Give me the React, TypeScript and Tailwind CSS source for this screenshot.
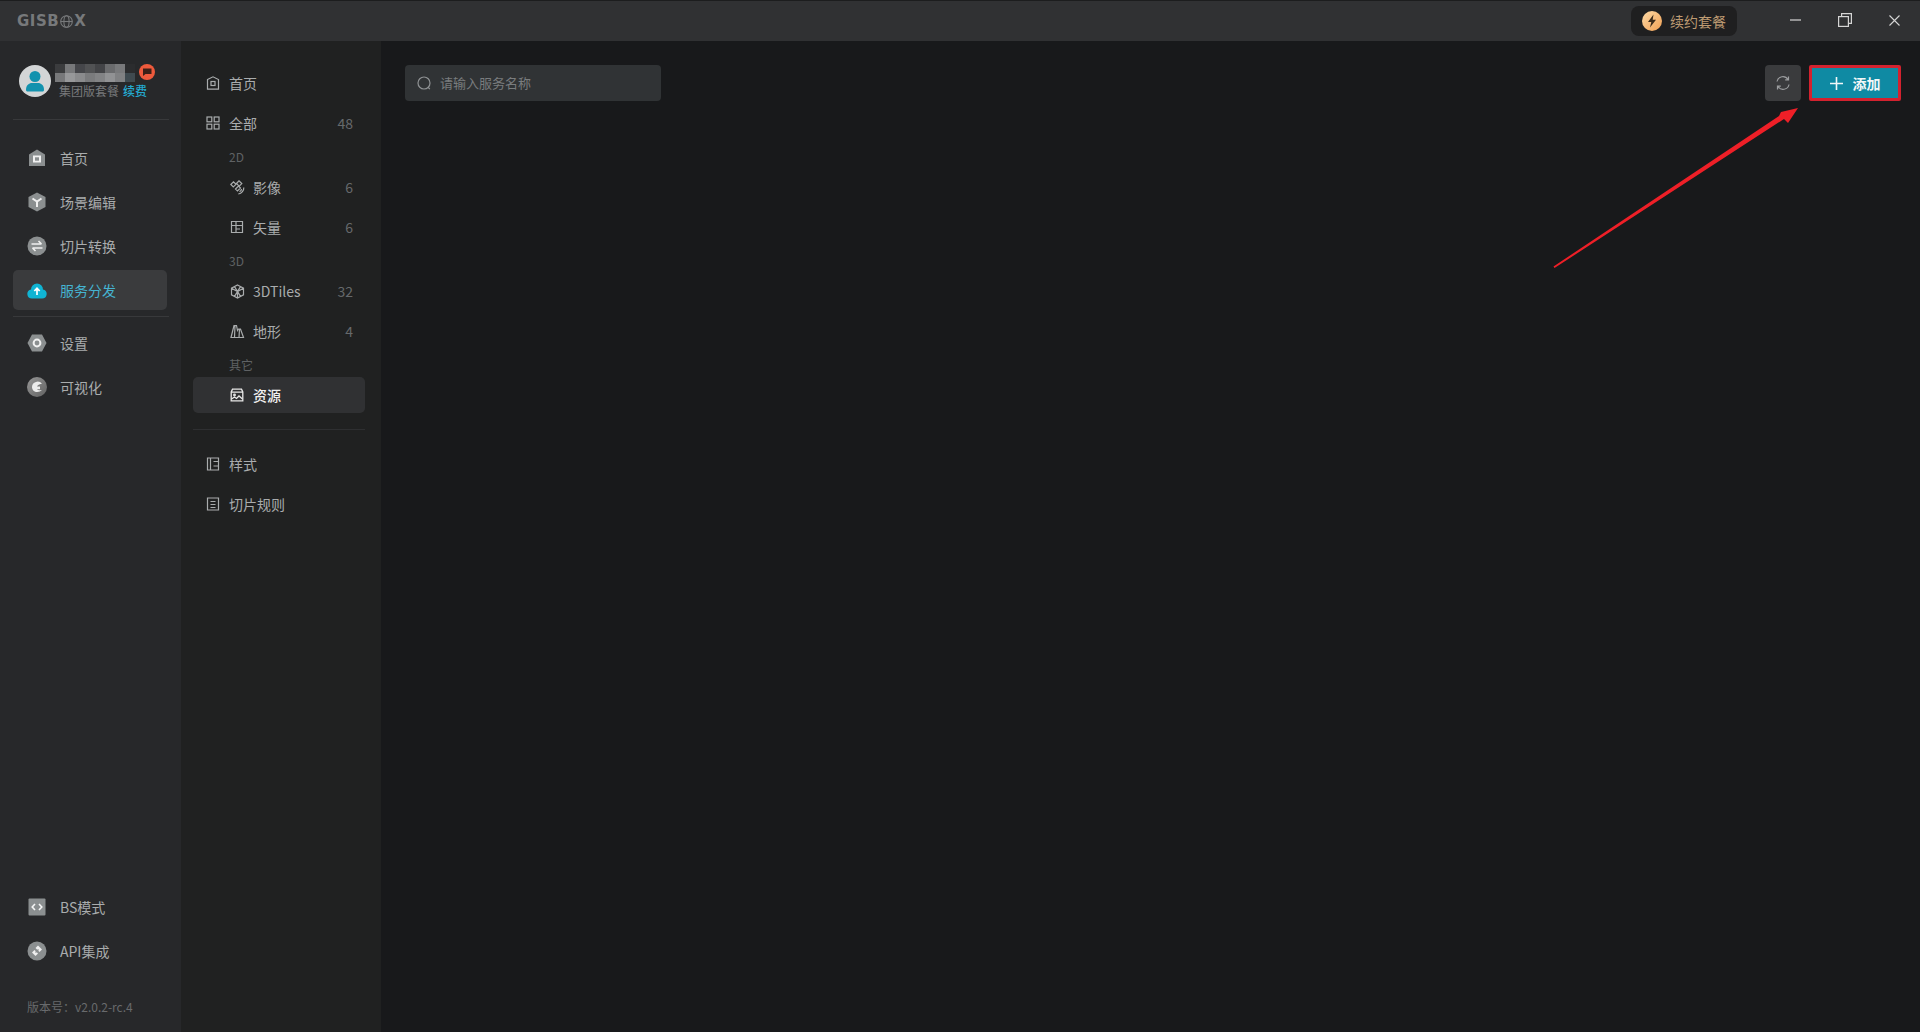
import React from "react";

const font = { fontFamily: '"Noto Sans CJK SC", "Noto Sans", sans-serif' };

const G = "#8b8f90";

function Home1() {
  return (
    <svg width="18" height="18" viewBox="0 0 18 18">
      <path d="M1 5.5 9 0.5l8 5V17H1z" fill={G} />
      <rect x="5" y="6.500" width="8" height="7" fill="#f0f0f0" />
      <rect x="7" y="8.300" width="4" height="3.400" fill={G} />
    </svg>
  );
}
function Cube() {
  return (
    <svg width="18" height="20" viewBox="0 0 18 20">
      <path d="M9 0.5 17.5 5v10L9 19.5.5 15V5z" fill={G} />
      <path d="M4.5 6.5 9 9.5l4.5-3M9 9.5V15" stroke="#efefef" strokeWidth="2" fill="none" />
    </svg>
  );
}
function Swap() {
  return (
    <svg width="20" height="20" viewBox="0 0 20 20">
      <circle cx="10" cy="10" r="9.5" fill={G} />
      <path d="M4.5 8h10M11.5 5l3 3M15.5 12h-10M8.5 15l-3-3" stroke="#f0f0f0" strokeWidth="1.6" fill="none" />
    </svg>
  );
}
function Cloud() {
  return (
    <svg width="20" height="18" viewBox="0 0 20 18">
      <path d="M5 17.5a4.6 4.6 0 0 1-1-9.1 6 6 0 0 1 12 0 4.6 4.6 0 0 1-1 9.1z" fill="#10b4d3" />
      <path d="M10 14V7.5M7.3 10 10 7.3l2.7 2.7" stroke="#fff" strokeWidth="1.7" fill="none" />
    </svg>
  );
}
function Gear() {
  return (
    <svg width="20" height="18" viewBox="0 0 20 18">
      <path d="M5 .5h10L19.5 9 15 17.5H5L.5 9z" fill={G} />
      <circle cx="10" cy="9" r="3.4" fill="none" stroke="#f0f0f0" strokeWidth="2" />
    </svg>
  );
}
function Vis() {
  return (
    <svg width="20" height="20" viewBox="0 0 20 20">
      <defs>
        <linearGradient id="vg" x1="0" y1="0" x2="1" y2="1">
          <stop offset="0" stopColor="#979797" />
          <stop offset="1" stopColor="#626262" />
        </linearGradient>
      </defs>
      <circle cx="10" cy="10" r="10" fill="url(#vg)" />
      <path d="M15 7A5.500 5.500 0 0 0 5 10c0 3 2.500 5 5 5 2 0 3.800-.7 5-2-1.800.4-4 .4-5-.8h3V9.500h-3c.8-2 3.300-2.500 5-2.500z" fill="#ececec" />
    </svg>
  );
}
function Code() {
  return (
    <svg width="18" height="18" viewBox="0 0 18 18">
      <rect x="0.5" y="0.5" width="17" height="17" rx="1" fill={G} />
      <path d="M7 6 4.2 9 7 12M11 6l2.800 3L11 12" stroke="#f5f5f5" strokeWidth="1.600" fill="none" />
    </svg>
  );
}
function Link() {
  return (
    <svg width="20" height="20" viewBox="0 0 20 20">
      <circle cx="10" cy="10" r="9.5" fill={G} />
      <path d="M11 4.500l4 4-2.500 2.500-4-4z" fill="#f0f0f0" />
      <path d="M7.500 9l3.500 3.500-2.500 2.500-3.500-3.500z" fill="#f0f0f0" />
      <path d="M8.500 11.500l3-3" stroke={G} strokeWidth="1.200" />
    </svg>
  );
}

const S = { fill: "none", stroke: "#a9acad", strokeWidth: 1.2 };

function LineHome() {
  return (
    <svg width="14" height="14" viewBox="0 0 14 14" {...S}>
      <path d="M1.500 3.500 7 .8l5.500 2.700v9.700h-11z" />
      <rect x="5" y="5.500" width="4" height="4" />
    </svg>
  );
}
function LineGrid() {
  return (
    <svg width="14" height="14" viewBox="0 0 14 14" {...S}>
      <rect x="1" y="1" width="4.800" height="4.800" />
      <rect x="8.200" y="1" width="4.800" height="4.800" />
      <rect x="1" y="8.200" width="4.800" height="4.800" />
      <rect x="8.200" y="8.200" width="4.800" height="4.800" />
    </svg>
  );
}
function LineSat() {
  return (
    <svg width="15" height="15" viewBox="0 0 15 15" {...S}>
      <path d="M.8 4.500 3.500 1.800 6 4.300 3.300 7zM6.500 3.500 9 .8l2.800 2.800-2.600 2.600zM5.500 9l3-3 2 2-3 3z" />
      <path d="M13.800 7.500c.2 3-2 6-5.500 6.500M11.500 9c0 1.300-.8 2.300-2 2.600" />
    </svg>
  );
}
function LineMap() {
  return (
    <svg width="14" height="14" viewBox="0 0 14 14" {...S}>
      <path d="M1.500 1.500h11v11h-11zM1.500 5.500h11M6 1.500v11M6 9h4" />
    </svg>
  );
}
function LineBox() {
  return (
    <svg width="15" height="15" viewBox="0 0 15 15" {...S}>
      <path d="M7.500 1 13.500 4.200v6.600L7.500 14 1.500 10.800V4.200zM1.500 4.200l6 3.300 6-3.300M7.500 7.500V14M4.500 2.600l6 9.800M10.500 2.600l-6 9.800" />
    </svg>
  );
}
function LineTerrain() {
  return (
    <svg width="15" height="15" viewBox="0 0 15 15" {...S}>
      <path d="M1 13.500 4 1.500h2.500l1 5 1-1.500h2l3 8.500zM5 1.500 4.500 13.500M9.500 5l-.5 8.500" />
    </svg>
  );
}
function LineRes({ c = "#e8e8e8" }: { c?: string }) {
  return (
    <svg width="14" height="14" viewBox="0 0 14 14" fill="none" stroke={c} strokeWidth="1.300">
      <path d="M2.500 1.200h9l1.300 2.800v8.800H1.200V4zM1.200 4.200h11.600" />
      <circle cx="4.500" cy="7" r="0.800" />
      <path d="M1.500 11l3-2 2 1.500 2.500-2.500 3.500 3" />
    </svg>
  );
}
function LineStyle() {
  return (
    <svg width="14" height="14" viewBox="0 0 14 14" {...S}>
      <path d="M1.500 1h11v12h-11zM4.500 1v12M7.500 4.500h5M7.500 9h5" />
    </svg>
  );
}
function LineRule() {
  return (
    <svg width="14" height="14" viewBox="0 0 14 14" {...S}>
      <path d="M1.500 1h11v12h-11zM4.500 4.500h5M4.500 7.500h5M4.500 10.500h5" />
    </svg>
  );
}

function NavItem({ icon, label, active }: { icon: React.ReactNode; label: string; active?: boolean }) {
  return (
    <div className={`mr-[2px] flex h-[40px] items-center rounded-[5px] pl-[12px] ${active ? "bg-[#3a3b3d]" : ""}`}>
      <div className="flex w-[24px] justify-center">{icon}</div>
      <span className={`ml-[11px] text-[14px] ${active ? "text-[#45b4d2]" : "text-[#a9acad]"}`}>{label}</span>
    </div>
  );
}

function SubRow({ icon, label, count, nested, active }: { icon: React.ReactNode; label: string; count?: number; nested?: boolean; active?: boolean }) {
  return (
    <div className={`flex h-[36px] items-center rounded-[5px] pr-[12px] ${nested ? "pl-[36px]" : "pl-[12px]"} ${active ? "bg-[#303133]" : ""}`}>
      <div className="flex w-[16px] justify-center">{icon}</div>
      <span className={`ml-[8px] flex-1 text-[14px] ${active ? "font-medium text-[#f0f0f0]" : "text-[#a9acad]"}`}>{label}</span>
      {count !== undefined && <span className="text-[14px] text-[#66696b]">{count}</span>}
    </div>
  );
}

function SectionLabel({ children }: { children: React.ReactNode }) {
  return <div className="mt-[4px] flex h-[24px] items-center pl-[36px] text-[12px] text-[#5f6264]">{children}</div>;
}

const mosaic = [
  ["#3b3c3e", "#77787a", "#45464a", "#515254", "#434447", "#6a6b6d", "#78797b", "#2b2c2e"],
  ["#77787a", "#97989a", "#8a8b8d", "#7a7b7d", "#828385", "#919294", "#808183", "#3f4a50"],
];

function App() {
  return (
    <div className="flex h-[1032px] w-[1920px] flex-col overflow-hidden bg-[#18191b]" style={font}>
      <header className="flex h-[41px] shrink-0 items-center border-t border-[#1c1d1e] bg-[#303133] pl-[17px]">
        <div className="flex items-center text-[15px] font-bold leading-none tracking-[0.5px] text-[#77797b]" style={{ fontFamily: '"DejaVu Sans", sans-serif' }}>
          <span>GISB</span>
          <svg width="13" height="13" viewBox="0 0 13 13" fill="none" stroke="#77797b" strokeWidth="1.100" className="mx-[1px]">
            <circle cx="6.500" cy="6.500" r="5.800" />
            <ellipse cx="6.500" cy="6.500" rx="2.600" ry="5.800" />
            <path d="M.7 6.500h11.600" />
          </svg>
          <span>X</span>
        </div>
        <div className="ml-auto flex h-[30px] w-[106px] items-center rounded-[8px] bg-[#1f1f20] pl-[11px]">
          <svg width="20" height="20" viewBox="0 0 20 20">
            <defs>
              <linearGradient id="og" x1="0" y1="0" x2="1" y2="1">
                <stop offset="0" stopColor="#fdd9a5" />
                <stop offset="1" stopColor="#f0a054" />
              </linearGradient>
            </defs>
            <circle cx="10" cy="10" r="10" fill="url(#og)" />
            <path d="M11.500 3.500 6 11h3.300L8 16.500 14 8.800h-3.300z" fill="#3a2a1a" />
          </svg>
          <span className="ml-[8px] text-[14px] text-[#bd9a72]">续约套餐</span>
        </div>
        <div className="mb-[2px] ml-[53px] flex w-[130px] items-center justify-between pr-[20px]">
          <svg width="11" height="2" viewBox="0 0 11 2"><path d="M0 1h11" stroke="#d5d5d5" strokeWidth="1.200" /></svg>
          <svg width="14" height="14" viewBox="0 0 14 14" fill="none" stroke="#d5d5d5" strokeWidth="1.200">
            <rect x="0.600" y="3.600" width="9.800" height="9.800" />
            <path d="M3.600 3.600V.6h9.800v9.800h-3" />
          </svg>
          <svg width="11" height="11" viewBox="0 0 11 11" fill="none" stroke="#d5d5d5" strokeWidth="1.100"><path d="M.5.5l10 10M10.500.5l-10 10" /></svg>
        </div>
      </header>

      <div className="flex min-h-0 flex-1">
        <aside className="flex w-[181px] shrink-0 flex-col bg-[#27282a] pl-[13px] pr-[12px]">
          <div className="flex h-[79px] shrink-0 items-start border-b border-[#38393b] pl-[6px] pt-[23px]">
            <svg width="32" height="32" viewBox="0 0 32 32" className="mt-[1px] shrink-0">
              <circle cx="16" cy="16" r="16" fill="#d3d5d6" />
              <circle cx="16" cy="11.500" r="5.500" fill="#1292ae" />
              <path d="M7 25c0-5 3-7 6-7h6c3 0 6 2 6 7 0 1-1 1.500-2 1.500H9c-1 0-2-.5-2-1.500z" fill="#1292ae" />
            </svg>
            <div className="ml-[4px] flex flex-col">
              <div className="flex items-start">
                <div className="grid w-[80px] grid-cols-8">
                  {mosaic.flat().map((c, i) => (
                    <div key={i} className="h-[9px] w-[10px]" style={{ backgroundColor: c }} />
                  ))}
                </div>
                <svg width="16" height="16" viewBox="0 0 16 16" className="ml-[4px]">
                  <circle cx="8" cy="8" r="8" fill="#ee5a3c" />
                  <path d="M4 4.500h8.500v5.500H6.500L4 12z" fill="#3c2018" />
                </svg>
              </div>
              <div className="ml-[4px] mt-[1px] flex text-[12px] leading-[16px]">
                <span className="text-[#77797b]">集团版套餐</span>
                <span className="ml-[4px] font-medium text-[#24a9cf]">续费</span>
              </div>
            </div>
          </div>

          <nav className="mt-[18px] flex flex-col gap-[4px]">
            <NavItem icon={<Home1 />} label="首页" />
            <NavItem icon={<Cube />} label="场景编辑" />
            <NavItem icon={<Swap />} label="切片转换" />
            <NavItem icon={<Cloud />} label="服务分发" active />
          </nav>
          <div className="mt-[6px] h-px bg-[#38393b]" />
          <nav className="mt-[6px] flex flex-col gap-[4px]">
            <NavItem icon={<Gear />} label="设置" />
            <NavItem icon={<Vis />} label="可视化" />
          </nav>
          <nav className="mt-auto flex flex-col gap-[4px]">
            <NavItem icon={<Code />} label="BS模式" />
            <NavItem icon={<Link />} label="API集成" />
          </nav>
          <div className="mb-[16px] mt-[27px] pl-[14px] text-[12px] leading-[18px] text-[#686a6c]">版本号：v2.0.2-rc.4</div>
        </aside>

        <aside className="w-[200px] shrink-0 bg-[#202121] pl-[12px] pr-[16px] pt-[24px]">
          <SubRow icon={<LineHome />} label="首页" />
          <div className="mt-[4px]">
            <SubRow icon={<LineGrid />} label="全部" count={48} />
          </div>
          <SectionLabel>2D</SectionLabel>
          <SubRow nested icon={<LineSat />} label="影像" count={6} />
          <div className="mt-[4px]">
            <SubRow nested icon={<LineMap />} label="矢量" count={6} />
          </div>
          <SectionLabel>3D</SectionLabel>
          <SubRow nested icon={<LineBox />} label="3DTiles" count={32} />
          <div className="mt-[4px]">
            <SubRow nested icon={<LineTerrain />} label="地形" count={4} />
          </div>
          <SectionLabel>其它</SectionLabel>
          <SubRow nested active icon={<LineRes />} label="资源" />
          <div className="mb-[16px] mt-[16px] h-px bg-[#2e2f31]" />
          <SubRow icon={<LineStyle />} label="样式" />
          <div className="mt-[4px]">
            <SubRow icon={<LineRule />} label="切片规则" />
          </div>
        </aside>

        <main className="relative min-w-0 flex-1 pl-[24px] pr-[19px] pt-[24px]">
          <div className="flex items-start justify-between">
            <div className="flex h-[36px] w-[256px] items-center rounded-[4px] bg-[#303335] pl-[12px]">
              <svg width="15" height="15" viewBox="0 0 15 15" fill="none" stroke="#8f9294" strokeWidth="1.200">
                <circle cx="7" cy="7" r="6" />
                <path d="M11.300 11.500l1.500 1.700" />
              </svg>
              <span className="ml-[8px] text-[13px] text-[#797c7e]">请输入服务名称</span>
            </div>
            <div className="flex items-center gap-[8px]">
              <div className="flex h-[36px] w-[36px] items-center justify-center rounded-[4px] bg-[#3a3b3d]">
                <svg width="16" height="16" viewBox="0 0 16 16" fill="none" stroke="#9b9d9f" strokeWidth="1.200">
                  <path d="M2 6.500A6 6 0 0 1 13 4.500M14 9.500A6 6 0 0 1 3 11.500M13.500 1.500v3.300h-3.300M2.500 14.500v-3.300h3.300" />
                </svg>
              </div>
              <div className="flex h-[36px] w-[92px] items-center justify-center rounded-[2px] border-[3px] border-[#d3222f] bg-[#0f8aa3]">
                <svg width="13" height="13" viewBox="0 0 13 13"><path d="M6.500 0v13M0 6.500h13" stroke="#f2f7f8" strokeWidth="1.600" /></svg>
                <span className="ml-[10px] text-[14px] font-bold text-[#f2f7f8]">添加</span>
              </div>
            </div>
          </div>
          <svg width="260" height="175" viewBox="0 0 260 175" className="absolute left-[1170px] top-[60px]">
            <path d="M2.500 165.500 228 15l2-4 17-4-10 15-4-4L3.500 167z" fill="#ee1f27" />
          </svg>
        </main>
      </div>
    </div>
  );
}

export default App;
